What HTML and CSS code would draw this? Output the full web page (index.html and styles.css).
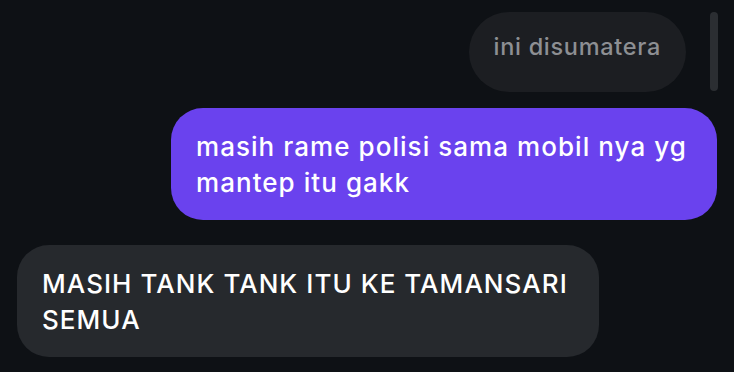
FILE: index.html
```html
<!DOCTYPE html>
<html lang="en">
<head>
  <meta charset="UTF-8" />
  <meta name="viewport" content="width=device-width, initial-scale=1" />
  <title>Chat</title>
  <link rel="stylesheet" href="styles.css">
</head>
<body>
  <main class="thread">
    <div class="msg reply">ini disumatera</div>
    <div class="msg out">masih rame polisi sama mobil nya yg mantep itu gakk</div>
    <div class="msg in">MASIH TANK TANK ITU KE TAMANSARI SEMUA</div>
    <!-- Scroll indicator -->
    <div class="scrollbar"></div>
  </main>
</body>
</html>
```

FILE: styles.css
```css
/* Reset & Global Styles */
html, body {
  margin: 0;
  padding: 0;
  height: 100%;
}
body {
  background-color: #0e1115;
  color: #fff;
  font-family: 'Inter', 'Noto Sans', sans-serif;
  font-weight: 500;
}
.thread {
  position: relative;
  display: flex;
  flex-direction: column;
  padding: 12px 17px;
}
/* Message bubbles */
.msg {
  font-size: 26px;
  letter-spacing: 1.05px;
  line-height: 36px;
  padding: 21px 25px 19px;
  border-radius: 32px;
  box-sizing: border-box;
}
.reply {
  align-self: flex-end;
  margin-right: 31px;
  padding: 17px 25px 17px;
  height: 80px;
  font-size: 23.5px;
  letter-spacing: 0.7px;
  background: #1c1e22;
  color: #8d8f93;
  border-radius: 40px;
}
.out {
  align-self: flex-end;
  max-width: 546px;
  margin-top: 16px;
  background: #6a42ee;
}
.in {
  align-self: flex-start;
  max-width: 582px;
  margin-top: 25px;
  background: #26292d;
}
/* Scroll indicator */
.scrollbar {
  position: absolute;
  top: 12px;
  right: 16px;
  width: 8px;
  height: 79px;
  border-radius: 4px;
  background: #2b2e32;
}
```
